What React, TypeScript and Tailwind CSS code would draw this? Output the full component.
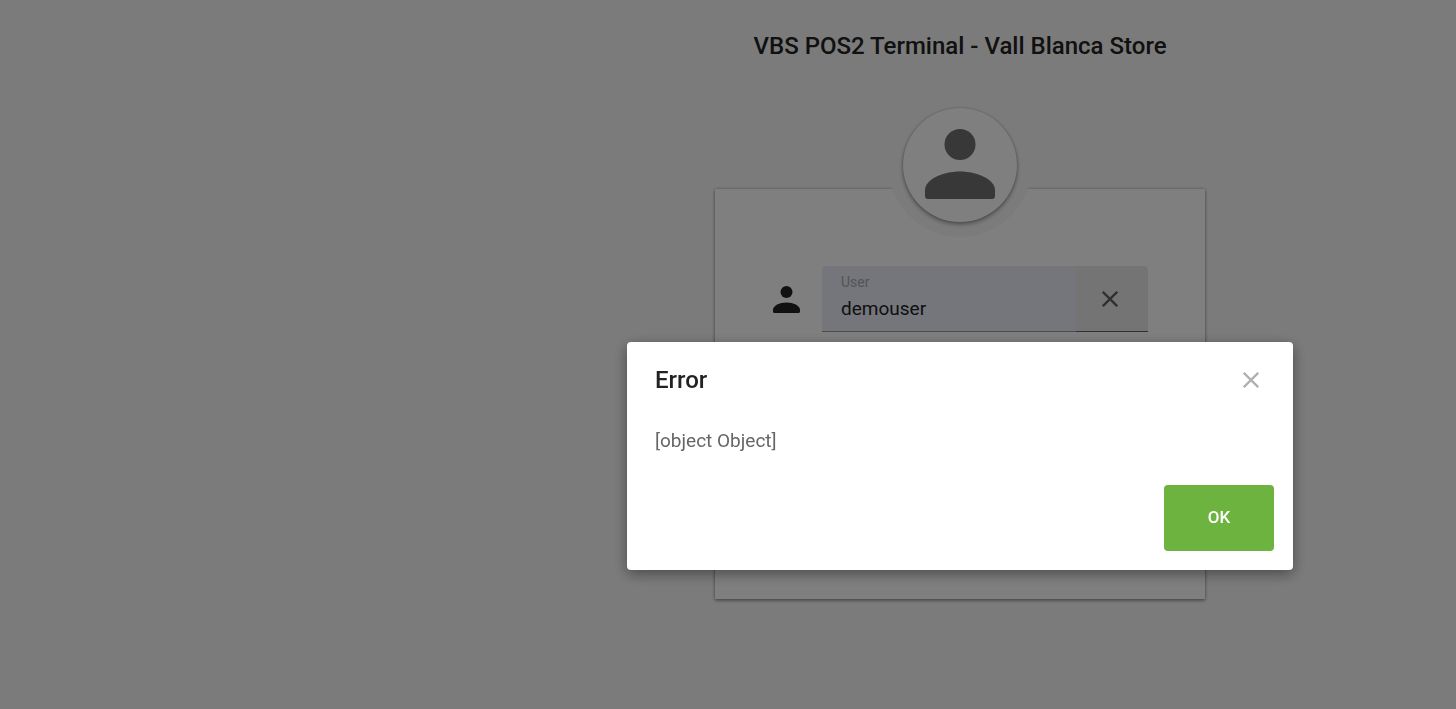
function PersonIcon({ className }: { className: string }) {
  return (
    <svg viewBox="0 0 70 70" className={className} fill="currentColor" aria-hidden="true">
      <circle cx="35" cy="15.5" r="15.5" />
      <path d="M35 42.5C53 42.5 70 51 70 61V67Q70 70 67 70H3Q0 70 0 67V61C0 51 17 42.5 35 42.5Z" />
    </svg>
  );
}

function CrossIcon({ className }: { className: string }) {
  return (
    <svg viewBox="0 0 16 16" className={className} fill="none" stroke="currentColor" strokeWidth="2.3" aria-hidden="true">
      <path d="M0.8 0.8L15.2 15.2M15.2 0.8L0.8 15.2" />
    </svg>
  );
}

export default function App() {
  return (
    <div className="min-h-screen bg-[#f7f7f7] font-['Roboto',sans-serif] text-[#222222]">
      <main className="flex min-h-screen flex-col items-center pt-7 md:pl-[464px]">
        <h1 className="text-2xl leading-9 font-medium">VBS POS2 Terminal - Vall Blanca Store</h1>

        <section className="mt-[125px] flex min-h-[410px] w-full max-w-[490px] flex-col items-center bg-white shadow-[0_2px_3px_rgba(0,0,0,0.3),0_0_3px_rgba(0,0,0,0.3)]">
          <div className="-mt-24 rounded-full bg-[#f7f7f7] p-[15px]">
            <div className="flex size-[114px] items-center justify-center rounded-full bg-white pb-0.5 text-[#707070] shadow-[0_2px_4px_rgba(0,0,0,0.4),0_0_2px_rgba(0,0,0,0.2)]">
              <PersonIcon className="size-[70px]" />
            </div>
          </div>

          <form className="mt-[29px] flex w-full items-center gap-[22px] pr-[57px] pl-[58px]">
            <PersonIcon className="size-[27px] shrink-0" />
            <div className="flex h-[66px] min-w-0 flex-1 overflow-hidden rounded-t">
              <div className="flex min-w-0 flex-1 flex-col border-b border-[#999999] bg-[#e8ecf8] px-[19px] pt-2">
                <label htmlFor="user" className="text-sm leading-4 text-[#a8a8a8]">User</label>
                <input id="user" defaultValue="demouser" className="mt-[7px] w-full bg-transparent text-[19px] leading-6 outline-none" />
              </div>
              <button type="button" aria-label="Clear user" className="flex w-[72px] items-center justify-center border-b border-[#606060] bg-[#e8e8e8] pr-1 text-[#606060]">
                <CrossIcon className="size-4" />
              </button>
            </div>
          </form>
        </section>
      </main>

      <div className="fixed inset-0 flex items-start justify-center overflow-auto bg-black/50 pt-[342px] md:pl-[464px]">
        <div role="dialog" aria-modal="true" aria-labelledby="dialog-title" className="w-full max-w-[666px] rounded bg-white shadow-[0_4px_14px_rgba(0,0,0,0.4)]">
          <header className="flex h-[76px] items-center justify-between px-7">
            <h2 id="dialog-title" className="text-2xl font-medium">Error</h2>
            <button type="button" aria-label="Close" className="flex size-7 items-center justify-center text-[#b0b0b0]">
              <CrossIcon className="size-4" />
            </button>
          </header>
          <p className="px-7 pt-2 text-[19px] leading-[30px] text-[#666666]">[object Object]</p>
          <footer className="flex justify-end px-[19px] pt-[29px] pb-[19px]">
            <button type="button" className="h-[66px] w-[110px] rounded bg-[#6cb33f] text-[17px] font-medium text-white">OK</button>
          </footer>
        </div>
      </div>
    </div>
  );
}
